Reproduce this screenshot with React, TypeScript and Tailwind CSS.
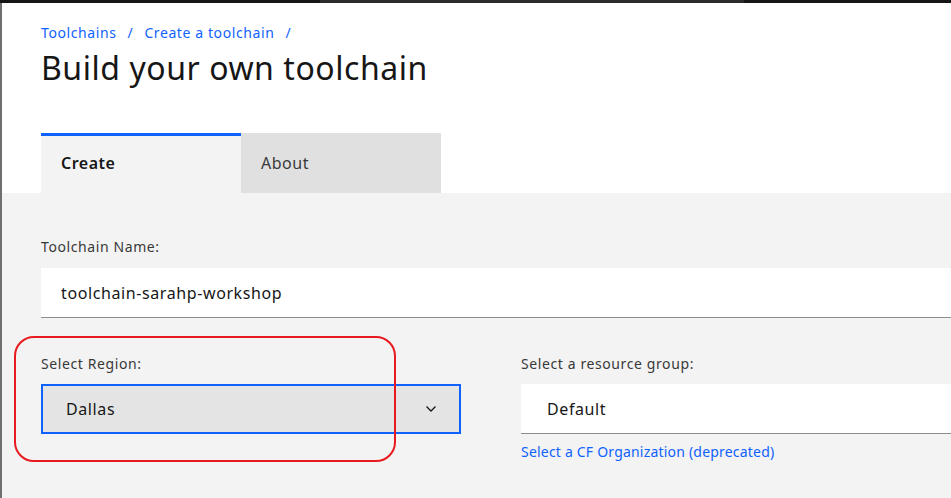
import React from "react";

export default function App() {
  const font = { fontFamily: '"Noto Sans", "Open Sans", sans-serif' };
  return (
    <div className="w-[951px] h-[498px] overflow-hidden bg-white relative" style={font}>
      <div className="flex h-[3px]">
        <div className="w-[320px] bg-[#161616]" />
        <div className="w-[424px] bg-[#2b2b2b]" />
        <div className="flex-1 bg-[#161616]" />
      </div>
      <div className="flex h-[495px]">
        <div className="w-[2px] bg-[#6f6f6f]" />
        <div className="flex-1 flex flex-col min-w-0">
          <div className="bg-white pl-[39px] pt-[21px]">
            <div className="flex items-center text-[14px] leading-[18px] tracking-[0.6px] text-[#0f62fe]">
              <span>Toolchains</span>
              <span className="mx-[11px]">/</span>
              <span>Create a toolchain</span>
              <span className="mx-[11px]">/</span>
            </div>
            <h1 className="mt-[6px] text-[32px] leading-[40px] tracking-[0.55px] font-normal text-[#161616]">
              Build your own toolchain
            </h1>
            <div className="mt-[45px] flex">
              <div className="w-[200px] h-[60px] bg-[#f3f3f3] border-t-[3px] border-[#0f62fe] flex items-center pl-[20px] pb-[3px] text-[16px] tracking-[0.5px] font-semibold text-[#161616]">
                Create
              </div>
              <div className="w-[200px] h-[60px] bg-[#e0e0e0] flex items-center pl-[20px] text-[16px] tracking-[0.5px] text-[#393939]">
                About
              </div>
            </div>
          </div>
          <div className="flex-1 bg-[#f3f3f3] pl-[39px] pt-[45px]">
            <div className="text-[14px] leading-[18px] tracking-[0.6px] text-[#393939]">Toolchain Name:</div>
            <div className="mt-[12px] w-[1000px] h-[50px] bg-white border-b border-[#8d8d8d] flex items-center pl-[20px] text-[16px] tracking-[0.6px] text-[#161616]">
              toolchain-sarahp-workshop
            </div>
            <div className="mt-[37px] flex gap-[60px]">
              <div className="w-[420px] shrink-0">
                <div className="text-[14px] leading-[18px] tracking-[0.6px] text-[#393939]">Select Region:</div>
                <div className="mt-[11px] h-[50px] bg-[#e4e4e4] border-2 border-[#0f62fe] flex items-center justify-between pl-[23px] pr-[20px] text-[16px] tracking-[0.6px] text-[#161616]">
                  <span>Dallas</span>
                  <svg width="16" height="16" viewBox="0 0 16 16" fill="none">
                    <path d="M3.5 5.5 L8 10 L12.5 5.5" stroke="#161616" strokeWidth="1.3" />
                  </svg>
                </div>
              </div>
              <div className="w-[520px] shrink-0">
                <div className="text-[14px] leading-[18px] tracking-[0.6px] text-[#393939]">Select a resource group:</div>
                <div className="mt-[11px] h-[50px] bg-white border-b border-[#8d8d8d] flex items-center pl-[26px] text-[16px] tracking-[0.6px] text-[#161616]">
                  Default
                </div>
                <div className="mt-[9px] text-[14px] leading-[18px] tracking-[0.2px] text-[#0f62fe]">
                  Select a CF Organization (deprecated)
                </div>
              </div>
            </div>
          </div>
        </div>
      </div>
      <div className="absolute left-[14px] top-[336px] w-[382px] h-[126px] border-2 border-[#e8191f] rounded-[20px]" />
    </div>
  );
}
